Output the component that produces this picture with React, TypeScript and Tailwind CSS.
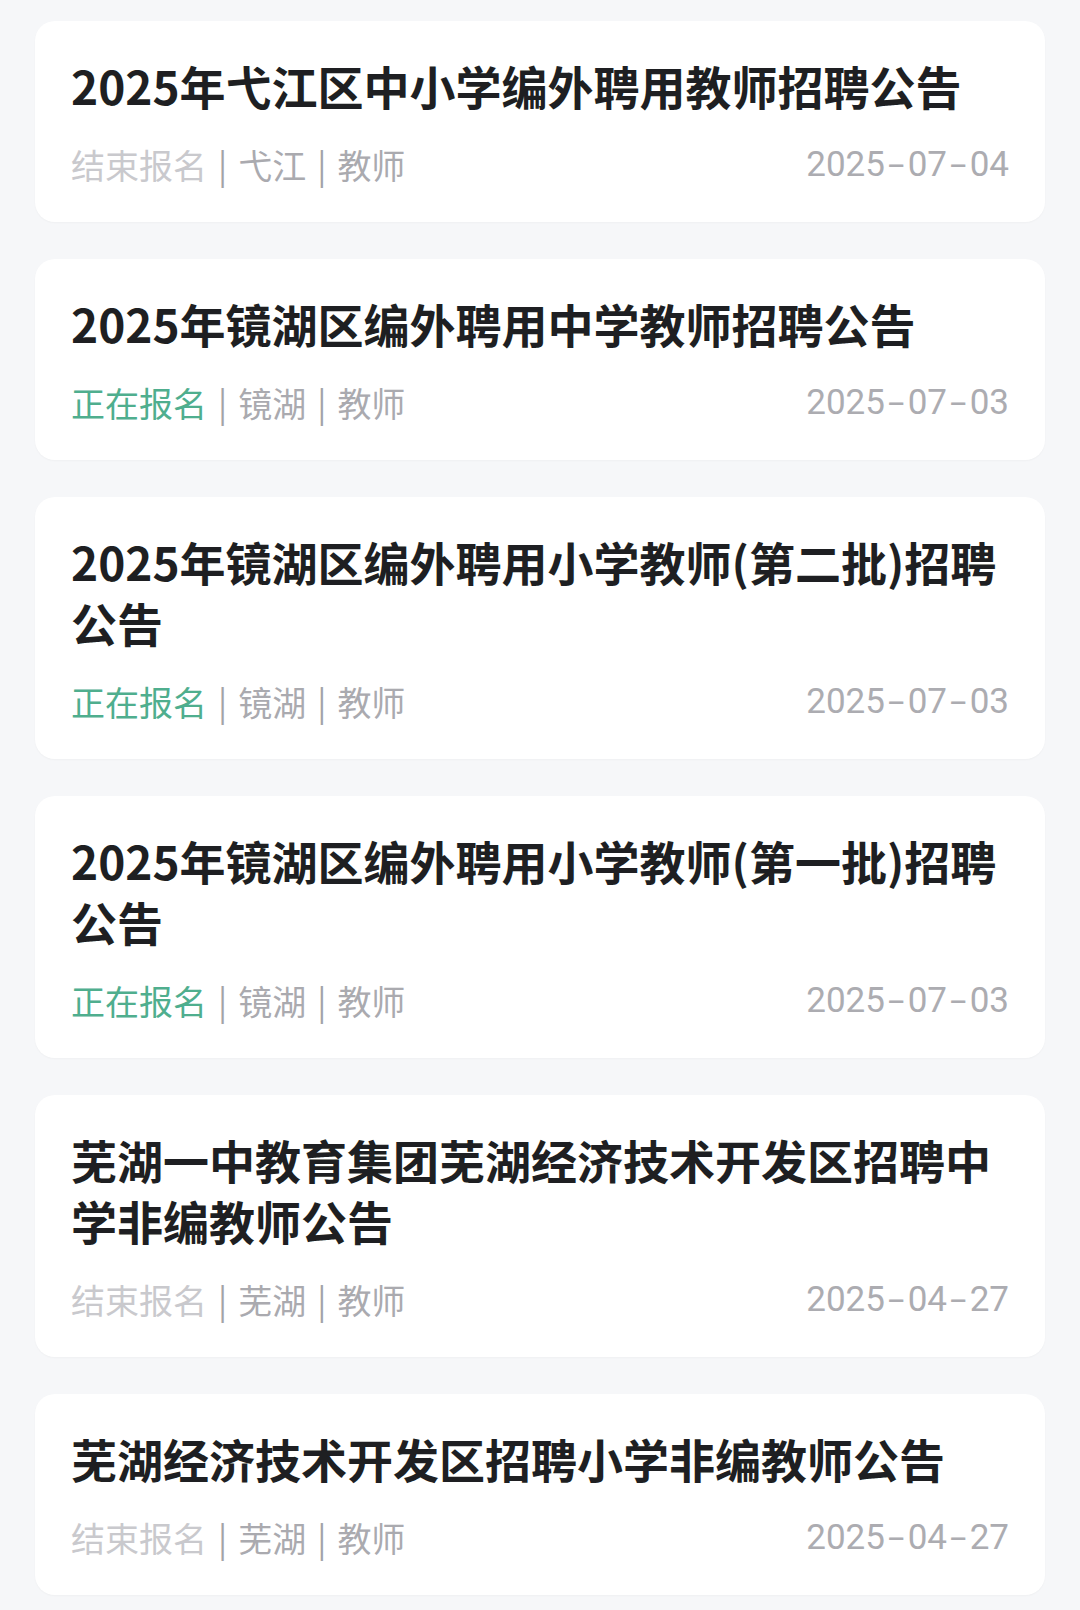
type Job = {
  title: string;
  status: "open" | "closed";
  area: string;
  kind: string;
  date: string;
};

const jobs: Job[] = [
  { title: "2025年弋江区中小学编外聘用教师招聘公告", status: "closed", area: "弋江", kind: "教师", date: "2025-07-04" },
  { title: "2025年镜湖区编外聘用中学教师招聘公告", status: "open", area: "镜湖", kind: "教师", date: "2025-07-03" },
  { title: "2025年镜湖区编外聘用小学教师(第二批)招聘公告", status: "open", area: "镜湖", kind: "教师", date: "2025-07-03" },
  { title: "2025年镜湖区编外聘用小学教师(第一批)招聘公告", status: "open", area: "镜湖", kind: "教师", date: "2025-07-03" },
  { title: "芜湖一中教育集团芜湖经济技术开发区招聘中学非编教师公告", status: "closed", area: "芜湖", kind: "教师", date: "2025-04-27" },
  { title: "芜湖经济技术开发区招聘小学非编教师公告", status: "closed", area: "芜湖", kind: "教师", date: "2025-04-27" },
];

function Divider() {
  return <span className="mx-[11px] text-[#a3a3a8]">|</span>;
}

function DateText({ date }: { date: string }) {
  const parts = date.split("-");
  return (
    <span className="font-['Roboto',sans-serif] text-[35px] text-[#acacb1]">
      {parts.map((p, i) => (
        <span key={i}>
          {i > 0 && (
            <span className="inline-block scale-x-[1.7] px-[6.5px]">-</span>
          )}
          {p}
        </span>
      ))}
    </span>
  );
}

function JobCard({ job }: { job: Job }) {
  const open = job.status === "open";
  return (
    <div className="rounded-[20px] bg-white px-[36px] pt-[34px] pb-[33px] shadow-[0_1px_2px_rgba(0,0,0,0.03)]">
      <h2 className="text-[46px] font-bold leading-[61px] text-[#1e1f22]">
        {job.title}
      </h2>
      <div className="mt-[25px] flex items-center justify-between text-[34px] leading-[48px]">
        <div className="flex items-center">
          <span className={open ? "text-[#4fae8e]" : "text-[#c9c9cd]"}>
            {open ? "正在报名" : "结束报名"}
          </span>
          <Divider />
          <span className="text-[#aaaaaf]">{job.area}</span>
          <Divider />
          <span className="text-[#aaaaaf]">{job.kind}</span>
        </div>
        <DateText date={job.date} />
      </div>
    </div>
  );
}

export default function App() {
  return (
    <div className="min-h-screen bg-[#f6f7f9] font-['Noto_Sans_CJK_SC','Noto_Sans',sans-serif]">
      <div className="flex flex-col gap-[37px] px-[35px] pt-[21px] pb-[20px]">
        {jobs.map((job, i) => (
          <JobCard key={i} job={job} />
        ))}
      </div>
    </div>
  );
}
